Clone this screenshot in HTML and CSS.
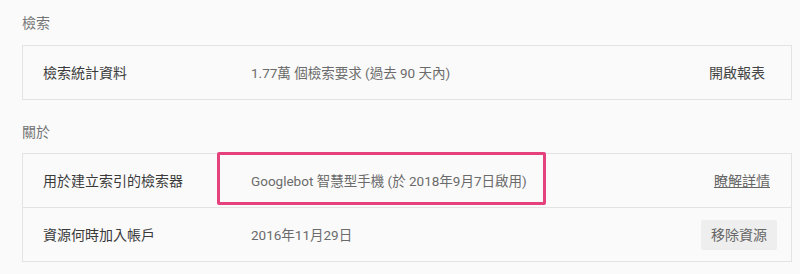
FILE: index.html
```html
<!DOCTYPE html>
<html lang="zh-Hant">
<head>
<meta charset="utf-8">
<link rel="stylesheet" href="styles.css">
</head>
<body>
<div class="page">
  <section class="section first">
    <h2 class="heading">檢索</h2>
    <div class="card">
      <div class="row">
        <div class="label">檢索統計資料</div>
        <div class="value">1.77萬 個檢索要求 (過去 90 天內)</div>
        <div class="action"><span class="open-link">開啟報表</span></div>
      </div>
    </div>
  </section>
  <section class="section">
    <h2 class="heading">關於</h2>
    <div class="card">
      <div class="row">
        <div class="label">用於建立索引的檢索器</div>
        <div class="value highlighted">Googlebot 智慧型手機 (於 2018年9月7日啟用)<span class="highlight"></span></div>
        <div class="action"><a class="learn-link" href="#">瞭解詳情</a></div>
      </div>
      <div class="row">
        <div class="label">資源何時加入帳戶</div>
        <div class="value">2016年11月29日</div>
        <div class="action"><button class="btn">移除資源</button></div>
      </div>
    </div>
  </section>
</div>
</body>
</html>
```

FILE: styles.css
```css
html, body {
  margin: 0;
  padding: 0;
  background: #fafafa;
}
body {
  font-family: Roboto, "Noto Sans CJK TC", sans-serif;
  font-size: 14px;
  color: #333;
}
.page {
  padding: 13px 8px 0 22px;
}
.section {
  margin-top: 22px;
}
.section.first {
  margin-top: 0;
}
.heading {
  margin: 0 0 12px 0;
  font-size: 14px;
  font-weight: 400;
  line-height: 20px;
  color: #757575;
}
.section + .section .heading {
  margin-bottom: 11px;
}
.card {
  border: 1px solid #e3e3e3;
  background: #fafafa;
}
.row {
  display: flex;
  align-items: center;
  min-height: 53px;
  padding: 0 14px 0 20px;
}
.row + .row {
  border-top: 1px solid #e3e3e3;
}
.label {
  width: 208px;
  flex: none;
  line-height: 20px;
  color: #3a3a3a;
}
.value {
  flex: 1;
  font-size: 13.5px;
  line-height: 20px;
  color: #6b6b6b;
}
.highlighted {
  position: relative;
}
.highlight {
  position: absolute;
  left: -34px;
  top: -19px;
  width: 323px;
  height: 47px;
  border: 3px solid #e5417d;
  border-radius: 2px;
}
.action {
  flex: none;
  display: flex;
  justify-content: flex-end;
  line-height: 20px;
}
.open-link {
  color: #454545;
  margin-right: 12px;
}
.learn-link {
  color: #666;
  text-decoration: underline;
  margin-right: 7px;
}
.btn {
  font-family: inherit;
  font-size: 14px;
  color: #666;
  background: #eeeeee;
  border: none;
  border-radius: 2px;
  padding: 5px 10px;
  line-height: 20px;
}
```
